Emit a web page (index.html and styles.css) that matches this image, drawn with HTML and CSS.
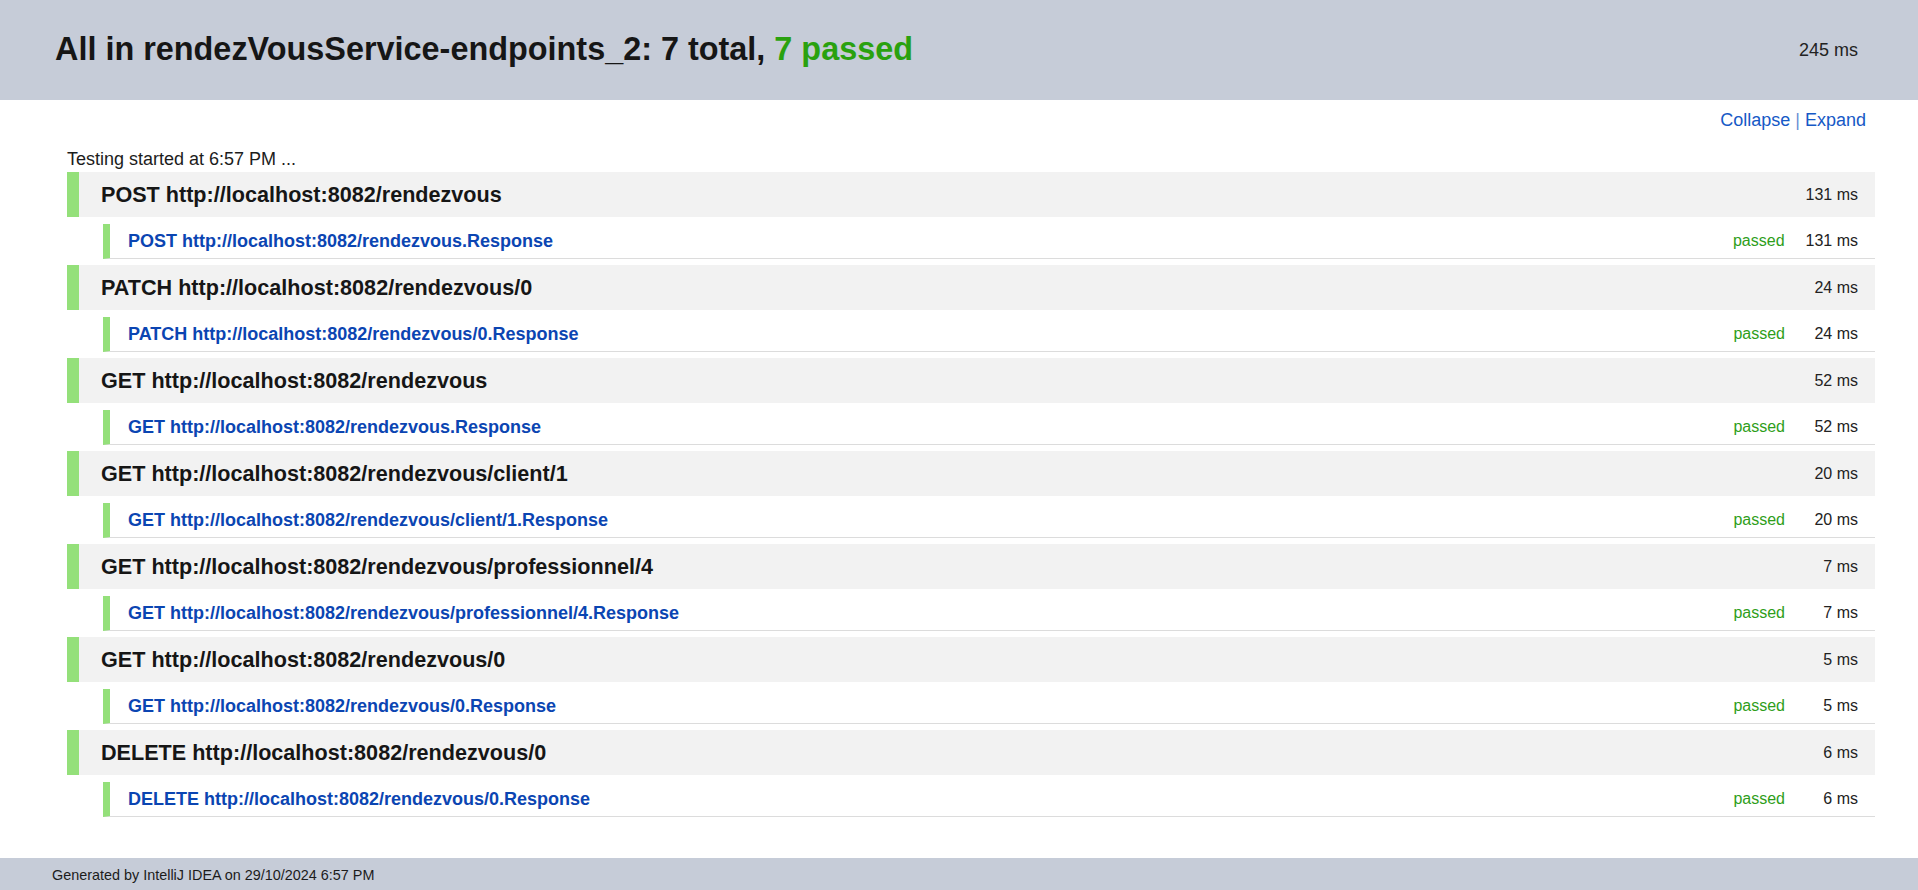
FILE: index.html
```html
<!DOCTYPE html>
<html>
<head>
<meta charset="utf-8">
<title>Test Results — All in rendezVousService-endpoints_2</title>
<link rel="stylesheet" href="styles.css">
</head>
<body>
<div class="header">
  <h1 class="title">All in rendezVousService-endpoints_2: 7 total, <span class="ok">7 passed</span></h1>
  <div class="total-time">245 ms</div>
</div>
<div class="content">
  <div class="toolbar"><a class="link">Collapse</a> <span class="sep">|</span> <a class="link">Expand</a></div>
  <div class="started">Testing started at 6:57 PM ...</div>
  <div class="suites">
    <div class="suite">
      <div class="suite-head"><span class="suite-name">POST http://localhost:8082/rendezvous</span><span class="time">131 ms</span></div>
      <div class="test"><span class="test-name">POST http://localhost:8082/rendezvous.Response</span><span class="status">passed</span><span class="time">131 ms</span></div>
    </div>
    <div class="suite">
      <div class="suite-head"><span class="suite-name">PATCH http://localhost:8082/rendezvous/0</span><span class="time">24 ms</span></div>
      <div class="test"><span class="test-name">PATCH http://localhost:8082/rendezvous/0.Response</span><span class="status">passed</span><span class="time">24 ms</span></div>
    </div>
    <div class="suite">
      <div class="suite-head"><span class="suite-name">GET http://localhost:8082/rendezvous</span><span class="time">52 ms</span></div>
      <div class="test"><span class="test-name">GET http://localhost:8082/rendezvous.Response</span><span class="status">passed</span><span class="time">52 ms</span></div>
    </div>
    <div class="suite">
      <div class="suite-head"><span class="suite-name">GET http://localhost:8082/rendezvous/client/1</span><span class="time">20 ms</span></div>
      <div class="test"><span class="test-name">GET http://localhost:8082/rendezvous/client/1.Response</span><span class="status">passed</span><span class="time">20 ms</span></div>
    </div>
    <div class="suite">
      <div class="suite-head"><span class="suite-name">GET http://localhost:8082/rendezvous/professionnel/4</span><span class="time">7 ms</span></div>
      <div class="test"><span class="test-name">GET http://localhost:8082/rendezvous/professionnel/4.Response</span><span class="status">passed</span><span class="time">7 ms</span></div>
    </div>
    <div class="suite">
      <div class="suite-head"><span class="suite-name">GET http://localhost:8082/rendezvous/0</span><span class="time">5 ms</span></div>
      <div class="test"><span class="test-name">GET http://localhost:8082/rendezvous/0.Response</span><span class="status">passed</span><span class="time">5 ms</span></div>
    </div>
    <div class="suite">
      <div class="suite-head"><span class="suite-name">DELETE http://localhost:8082/rendezvous/0</span><span class="time">6 ms</span></div>
      <div class="test"><span class="test-name">DELETE http://localhost:8082/rendezvous/0.Response</span><span class="status">passed</span><span class="time">6 ms</span></div>
    </div>
  </div>
</div>
<div class="footer">Generated by IntelliJ IDEA on 29/10/2024 6:57 PM</div>
</body>
</html>
```

FILE: styles.css
```css
* { box-sizing: border-box; }
html, body { margin: 0; padding: 0; }
body {
  font-family: "Liberation Sans", Arial, sans-serif;
  font-size: 18px;
  color: #1c1c1c;
  background: #ffffff;
}
.header {
  height: 100px;
  background: #c6ccd8;
  display: flex;
  align-items: center;
  justify-content: space-between;
  padding: 0 60px 0 55px;
}
.title {
  margin: 0;
  font-size: 32.4px;
  font-weight: bold;
  color: #161616;
  position: relative;
  top: -1px;
}
.ok { color: #2aa10f; }
.total-time { font-size: 18px; color: #222; }
.content { padding: 10px 43px 35px 67px; }
.toolbar {
  text-align: right;
  padding-right: 9px;
}
.link { color: #1659c6; text-decoration: none; cursor: pointer; }
.sep { color: #6a8fd4; }
.started { margin-top: 18px; color: #1c1c1c; }
.suites { margin-top: 2px; }
.suite { margin-bottom: 6px; }
.suite-head {
  height: 45px;
  background: #f2f2f2;
  border-left: 12px solid #94e07a;
  display: flex;
  align-items: center;
  padding: 0 17px 0 22px;
}
.suite-name {
  flex: 1;
  font-size: 21.6px;
  font-weight: bold;
  color: #161616;
}
.time {
  font-size: 16px;
  color: #222;
  min-width: 52px;
  text-align: right;
}
.test {
  margin: 7px 0 0 36px;
  height: 35px;
  border-left: 7px solid #94e07a;
  border-bottom: 1px solid #dcdcdc;
  display: flex;
  align-items: center;
  padding: 0 17px 0 18px;
}
.test-name {
  flex: 1;
  font-weight: bold;
  color: #0b45b2;
}
.status {
  font-size: 16px;
  color: #2e9e1a;
  margin-right: 21px;
}
.footer {
  height: 33px;
  background: #c6ccd8;
  display: flex;
  align-items: center;
  padding-left: 52px;
  font-size: 14.4px;
  color: #1c1c1c;
}
```
